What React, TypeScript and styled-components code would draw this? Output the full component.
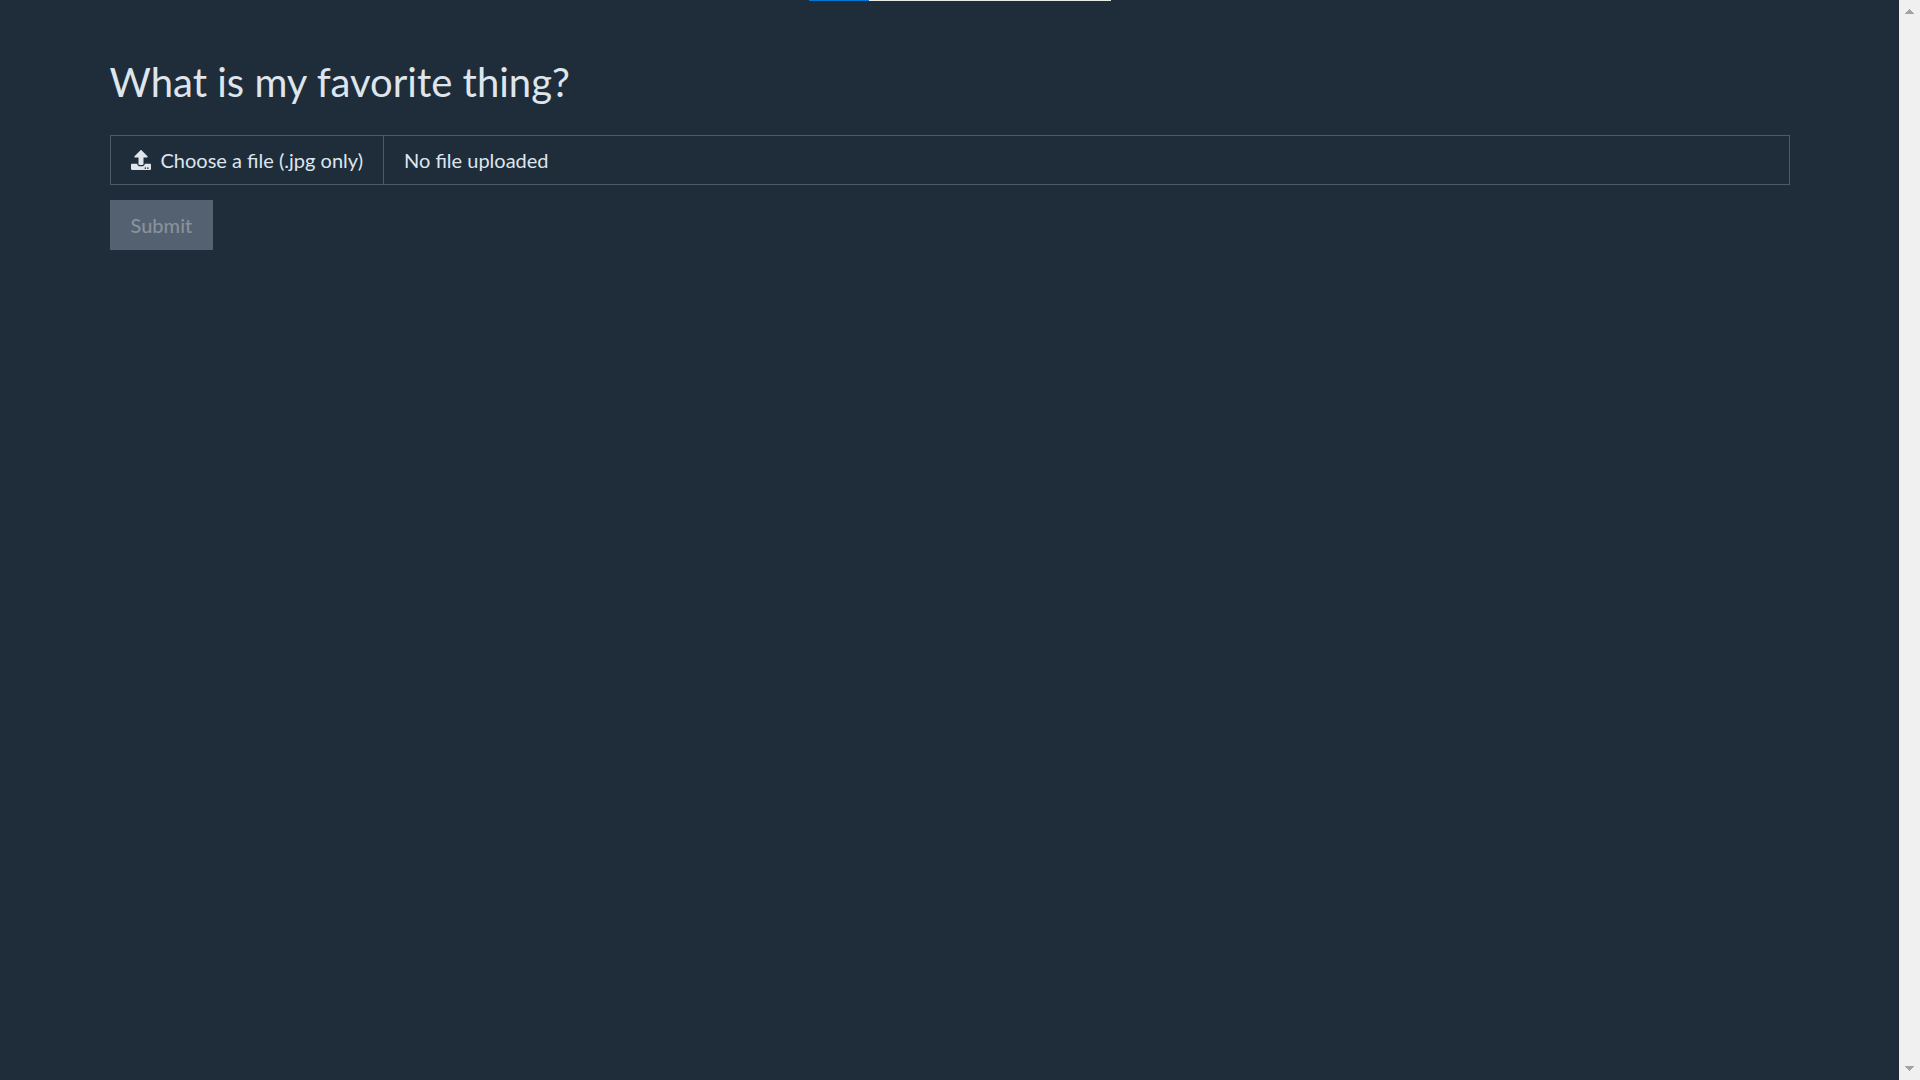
import React, { useState } from "react";
import styled, { createGlobalStyle } from "styled-components";
import { FaUpload } from "react-icons/fa";

const GlobalStyle = createGlobalStyle`
  *, *::before, *::after { box-sizing: border-box; }
  body {
    margin: 0;
    background: #1f2d3b;
    color: #dee5ed;
    font-family: Lato, "Liberation Sans", sans-serif;
    font-size: 20px;
    line-height: 30px;
  }
`;

const Shell = styled.div`
  display: grid;
  grid-template-columns: 1fr 21px;
  min-height: 100vh;
`;

const LoadingStrip = styled.div`
  position: absolute;
  top: 0;
  left: 0;
  right: 0;
  display: flex;
  justify-content: center;
`;

const Strip = styled.div<{ $width: number; $color: string }>`
  width: ${(p) => p.$width}px;
  height: 1px;
  background: ${(p) => p.$color};
`;

const Page = styled.main`
  padding: 52px 40px;
`;

const Container = styled.form`
  max-width: 1680px;
  margin: 0 auto;
`;

const Title = styled.h1`
  margin: 0 0 23px;
  font-size: 40px;
  font-weight: 400;
  line-height: 60px;
`;

const FileField = styled.label`
  display: flex;
  height: 50px;
  margin-bottom: 15px;
  border: 1px solid #4c5b69;
  cursor: pointer;
`;

const FileInput = styled.input`
  position: absolute;
  width: 1px;
  height: 1px;
  opacity: 0;
`;

const FileCta = styled.span`
  display: flex;
  align-items: center;
  gap: 10px;
  padding: 0 20px;
  border-right: 1px solid #4c5b69;
  white-space: nowrap;
`;

const FileName = styled.span`
  flex: 1;
  display: flex;
  align-items: center;
  padding: 0 20px;
`;

const SubmitButton = styled.button`
  height: 50px;
  padding: 0 21px;
  border: 0;
  background: #536170;
  color: #88929c;
  font: inherit;
  font-weight: 500;
`;

const ScrollTrack = styled.aside`
  display: flex;
  flex-direction: column;
  justify-content: space-between;
  background: #f0f0f0;
`;

const ScrollButton = styled.button`
  display: flex;
  justify-content: center;
  align-items: center;
  height: 23px;
  padding: 0;
  border: 0;
  background: transparent;
`;

const Arrow = ({ down = false }: { down?: boolean }) => (
  <svg width="9" height="5" viewBox="0 0 9 5" fill="#a3a3a3" shapeRendering="crispEdges" aria-hidden="true">
    <path
      d={
        down
          ? "M0 0h9v1H8v1H7v1H6v1H5v1H4V4H3V3H2V2H1V1H0z"
          : "M0 5h9V4H8V3H7V2H6V1H5V0H4v1H3v1H2v1H1v1H0z"
      }
    />
  </svg>
);

export default function App() {
  const [name, setName] = useState("");

  return (
    <>
      <GlobalStyle />
      <LoadingStrip>
        <Strip $width={60} $color="#0078d7" />
        <Strip $width={242} $color="#e6ebe6" />
      </LoadingStrip>
      <Shell>
        <Page>
          <Container onSubmit={(e) => e.preventDefault()}>
            <Title>What is my favorite thing?</Title>
            <FileField htmlFor="file">
              <FileInput
                id="file"
                type="file"
                accept=".jpg"
                onChange={(e) => setName(e.target.files?.[0]?.name ?? "")}
              />
              <FileCta>
                <FaUpload size={20} aria-hidden="true" />
                Choose a file (.jpg only)
              </FileCta>
              <FileName>{name || "No file uploaded"}</FileName>
            </FileField>
            <SubmitButton type="submit" disabled={!name}>
              Submit
            </SubmitButton>
          </Container>
        </Page>
        <ScrollTrack>
          <ScrollButton type="button" aria-label="Scroll up">
            <Arrow />
          </ScrollButton>
          <ScrollButton type="button" aria-label="Scroll down">
            <Arrow down />
          </ScrollButton>
        </ScrollTrack>
      </Shell>
    </>
  );
}
